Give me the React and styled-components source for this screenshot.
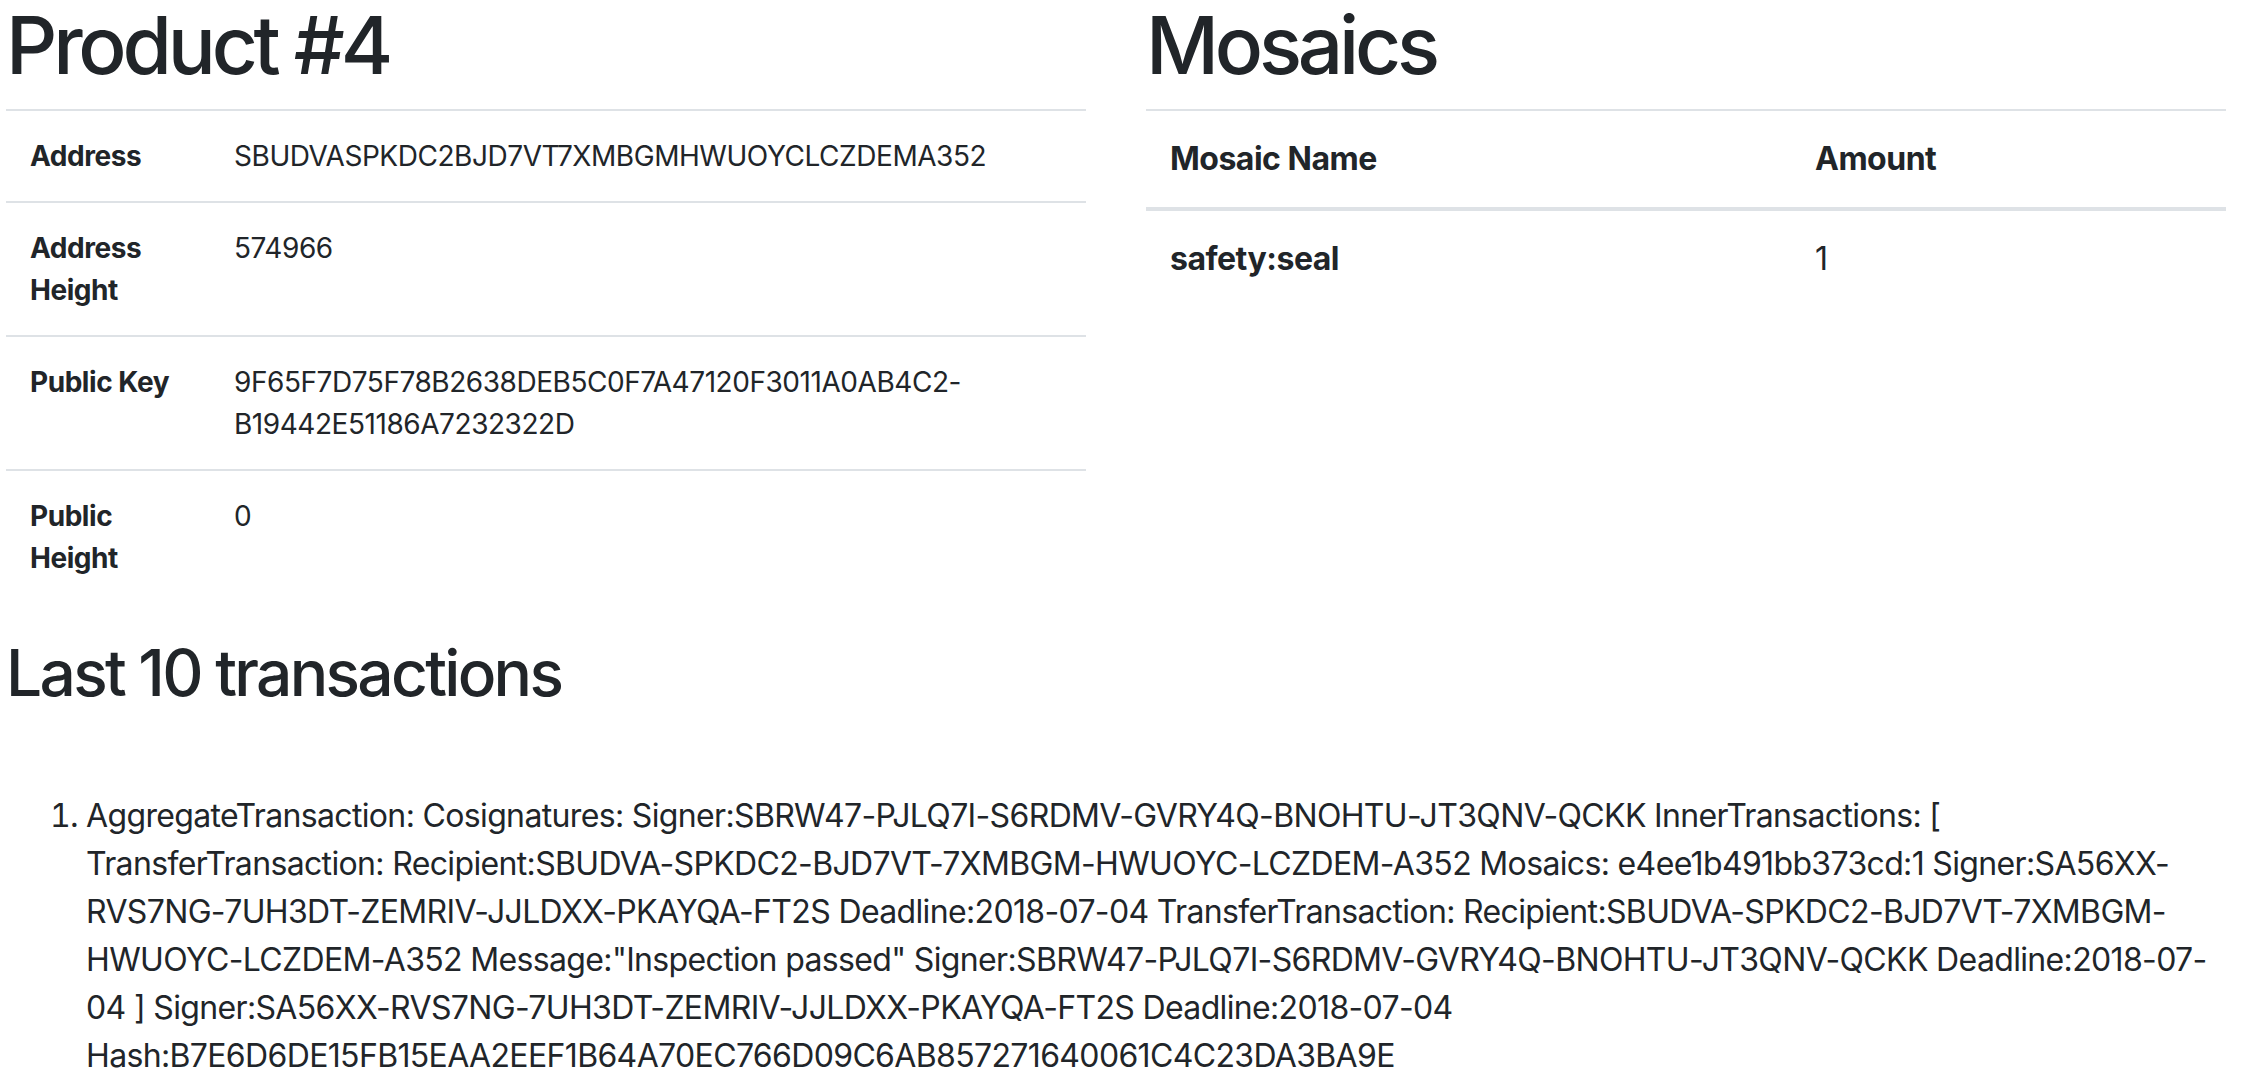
import React from 'react';
import styled, { createGlobalStyle } from 'styled-components';

const GlobalStyle = createGlobalStyle`
  html, body {
    margin: 0;
    padding: 0;
    background: #fff;
  }
  body {
    font-family: Inter, "Noto Sans", "Liberation Sans", sans-serif;
    color: #212529;
    font-size: 32px;
    line-height: 1.5;
    overflow: hidden;
  }
`;

const Page = styled.div`
  padding: 0 16px 0 6px;
  margin-top: -3px;
`;

const Row = styled.div`
  display: grid;
  grid-template-columns: 1fr 1fr;
  column-gap: 60px;
`;

const Column = styled.section`
  min-width: 0;
`;

const Title = styled.h1`
  font-size: 80px;
  font-weight: 500;
  line-height: 1.2;
  margin: 0 0 16px;
  letter-spacing: -4.2px;
`;

const SubTitle = styled.h2`
  font-size: 64px;
  font-weight: 500;
  line-height: 1.2;
  margin: 0 0 16px;
  letter-spacing: -2.7px;
`;

const Table = styled.table`
  width: 100%;
  border-collapse: collapse;
  margin-bottom: 32px;
  font-size: ${(p) => (p.$small ? '28px' : '32px')};
  line-height: 1.5;
  letter-spacing: ${(p) => (p.$small ? '-0.45px' : '-0.5px')};
`;

const HeadCell = styled.th`
  text-align: left;
  vertical-align: top;
  font-weight: 700;
  padding: 24px;
  border-top: 2px solid #dee2e6;
  width: ${(p) => p.$width || 'auto'};
`;

const ColHead = styled.th`
  text-align: left;
  vertical-align: bottom;
  font-weight: 700;
  padding: 24px;
  border-top: 2px solid #dee2e6;
  border-bottom: 4px solid #dee2e6;
  width: ${(p) => p.$width || 'auto'};
`;

const Cell = styled.td`
  vertical-align: top;
  padding: 24px;
  border-top: 2px solid #dee2e6;
`;

const TxList = styled.ol`
  margin: 80px 0 0;
  padding-left: 80px;
  letter-spacing: -0.65px;
`;

const TxItem = styled.li`
  overflow-wrap: break-word;
`;

const details = [
  { label: 'Address', value: 'SBUDVASPKDC2BJD7VT7XMBGMHWUOYCLCZDEMA352' },
  { label: 'Address Height', value: '574966' },
  {
    label: 'Public Key',
    value: (
      <>
        9F65F7D75F78B2638DEB5C0F7A47120F3011A0AB4C2-
        <br />
        B19442E51186A7232322D
      </>
    ),
  },
  { label: 'Public Height', value: '0' },
];

const transactions = [
  'AggregateTransaction: Cosignatures: Signer:SBRW47-PJLQ7I-S6RDMV-GVRY4Q-BNOHTU-JT3QNV-QCKK InnerTransactions: [ TransferTransaction: Recipient:SBUDVA-SPKDC2-BJD7VT-7XMBGM-HWUOYC-LCZDEM-A352 Mosaics: e4ee1b491bb373cd:1 Signer:SA56XX-RVS7NG-7UH3DT-ZEMRIV-JJLDXX-PKAYQA-FT2S Deadline:2018-07-04 TransferTransaction: Recipient:SBUDVA-SPKDC2-BJD7VT-7XMBGM-HWUOYC-LCZDEM-A352 Message:"Inspection passed" Signer:SBRW47-PJLQ7I-S6RDMV-GVRY4Q-BNOHTU-JT3QNV-QCKK Deadline:2018-07-04 ] Signer:SA56XX-RVS7NG-7UH3DT-ZEMRIV-JJLDXX-PKAYQA-FT2S Deadline:2018-07-04 Hash:B7E6D6DE15FB15EAA2EEF1B64A70EC766D09C6AB857271640061C4C23DA3BA9E',
  'AggregateTransaction: Cosignatures: Signer:SBRW47-PJLQ7I-S6RDMV-GVRY4Q-BNOHTU-JT3QNV-QCKK InnerTransactions: [ TransferTransaction: Recipient:SBUDVA-SPKDC2-BJD7VT-7XMBGM-HWUOYC-LCZDEM-A352 Mosaics: e4ee1b491bb373cd:1 Signer:SA56XX-RVS7NG-7UH3DT-ZEMRIV-JJLDXX-PKAYQA-FT2S Deadline:2018-07-04 ]',
];

const App = () => {
  return (
    <>
      <GlobalStyle />
      <Page>
        <Row>
          <Column>
            <Title>Product #4</Title>
            <Table $small>
              <tbody>
                {details.map((d) => (
                  <tr key={d.label}>
                    <HeadCell $width="156px">{d.label}</HeadCell>
                    <Cell>{d.value}</Cell>
                  </tr>
                ))}
              </tbody>
            </Table>
          </Column>
          <Column>
            <Title>Mosaics</Title>
            <Table>
              <thead>
                <tr>
                  <ColHead $width="597px">Mosaic Name</ColHead>
                  <ColHead>Amount</ColHead>
                </tr>
              </thead>
              <tbody>
                <tr>
                  <HeadCell>safety:seal</HeadCell>
                  <Cell>1</Cell>
                </tr>
              </tbody>
            </Table>
          </Column>
        </Row>
        <SubTitle>Last 10 transactions</SubTitle>
        <TxList>
          {transactions.map((t, i) => (
            <TxItem key={i}>{t}</TxItem>
          ))}
        </TxList>
      </Page>
    </>
  );
};

export default App;
